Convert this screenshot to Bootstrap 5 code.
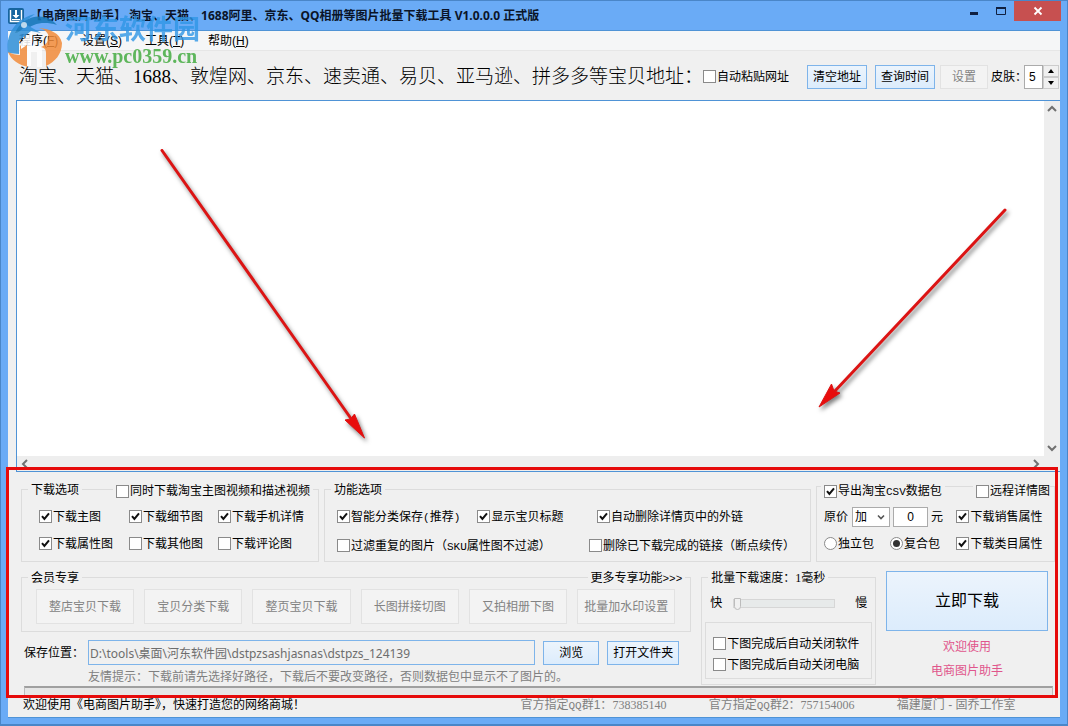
<!DOCTYPE html>
<html lang="zh-CN">
<head>
<meta charset="utf-8">
<meta name="viewport" content="width=device-width, initial-scale=1">
<title>电商图片助手</title>
<link href="https://cdn.jsdelivr.net/npm/bootstrap@5.3.0/dist/css/bootstrap.min.css" rel="stylesheet">
<style>
:root { --face: #f0f0f0; --line: #dcdcdc; --frame: #6aabf6; --edge: #4f93d6; }
body { background: var(--frame); color: #000; font: 12px/16px "Liberation Sans", "Noto Sans CJK SC", sans-serif; }
button, input, select { font: inherit; color: inherit; }
a { color: inherit; text-decoration: none; }
label { white-space: nowrap; }
.hw { font-family: "Liberation Mono", "Noto Sans CJK SC", monospace; font-size: 11px; line-height: 12px; }
.dg { font-family: "Liberation Serif", "Noto Sans CJK SC", serif; }

/* window frame */
.win { border: 1px solid #4a86c8; border-bottom-width: 2px; padding: 0 7px 6px; }
.titlebar { height: 29px; font-family: "Noto Sans", "Noto Sans CJK SC", sans-serif; }
.titlebar h1 { font-size: 12px; line-height: 16px; font-weight: 700; color: #0a1428; margin-left: 6px; }
.winbtns { height: 20px; }
.winbtns button { border: 0; background: none; padding: 0; width: 27px; display: grid; place-items: center; }
.winbtns .shut { background: #c75050; width: 47px; margin-right: -1px; }
.client { background: var(--face); border: solid var(--edge); border-width: 1px 0 1px 0; }
.menubar { background: #f5f6f7; border-bottom: 1px solid #e6e6e6; height: 20px; padding-left: 11px; }
.menubar a { width: 63px; }
.menubar .nav-item u { text-decoration-thickness: 1px; text-underline-offset: 1px; }

/* watermark */
.brand { left: 4px; top: 10px; pointer-events: none; z-index: 3; gap: 2px; }
.brand b { display: block; font-family: "Noto Sans CJK SC", sans-serif; font-size: 27px; line-height: 34px; color: #2f97e6; opacity: .8; }
.brand i { display: block; font: bold 20px/22px "Liberation Serif", serif; color: #4fb04c; opacity: .9; }

/* toolbar */
.tools { height: 49px; padding: 2px 1px 0 11px; }
.tools .lead-label { font-family: "Liberation Serif", "Noto Sans CJK SC", serif; font-size: 19px; line-height: 24px; font-weight: 300; }
.cmd { border: 1px solid #7eb4ea; border-radius: 0; background: linear-gradient(#ecf4fc, #dcecfc); padding: 0 4px; height: 24px; white-space: nowrap; color: #000; }
.cmd:disabled { border-color: #e2e2e2; background: #f3f3f3; color: #838383; }
.cmd.w-s { width: 48px; margin-left: 5px; margin-right: 3px; }
.cmd.w-m { width: 60px; }
.cmd.tall { height: 35px; }
.cmd.big { height: 60px; font-size: 16px; }
.field { border: 1px solid #ababab; border-radius: 0; background: #fff; padding: 0 4px; min-width: 0; }
.skin-label { margin-right: -3px; }
.num { width: 19px; height: 24px; }
.spin button { border: 1px solid #ccc; background: #f0f0f0; padding: 0; width: 16px; height: 12px; display: grid; place-items: center; }

/* address editor */
.editor { margin-left: 8px; border: solid var(--edge); border-width: 1px 0 1px 1px; display: grid; grid-template: minmax(200px, 1fr) 15px / 1fr 16px; }
.editor textarea { border: 0; resize: none; overflow: hidden; border-radius: 0; outline: 0; }
.bar { background: #eee; }
.marks { inset: 0; pointer-events: none; filter: drop-shadow(2px 3px 2px rgba(0, 0, 0, .5)); }

/* option panel */
.panel { padding: 17px 5px 0 13px; }
.outline { inset: -5px 2px -1px -2px; border: 3px solid #e60a0a; pointer-events: none; z-index: 2; }
.row-a { display: grid; grid-template-columns: 298fr 487fr 239fr; gap: 5px; }
.row-b { display: grid; grid-template-columns: 671fr 175fr 162fr; gap: 10px; padding-right: 7px; margin-top: 9px; }
.box { border: 1px solid var(--line); }
.cap { margin-top: -9px; height: 18px; padding: 0 5px 0 6px; }
.cap > * { background: var(--face); padding: 0 3px; }
.opts { display: grid; grid-auto-rows: 27px; align-items: center; }
.opts-1 { grid-template-columns: 90fr 89fr 100fr; padding: 4px 0 4px 17px; }
.opts-2 { grid-template-columns: 141fr 120fr 214fr; row-gap: 2px; padding: 4px 0 2px 12px; }
.opts-2 .wide { grid-column: 1 / 3; }
.opts-2 .pull { margin-left: -8px; }
.opts-3 { grid-template-columns: 133fr 98fr; padding: 7px 0 3px 7px; }
.lift { margin-top: -3px; }
.tick { display: inline-flex; align-items: center; gap: 1px; }
.tick .form-check-input { width: 13px; height: 13px; margin: 0; border: 1px solid #8a8a8a; border-radius: 0; background-color: #fff; background-size: 11px 11px; flex: none; }
.tick .form-check-input[type=radio] { border-radius: 50%; }
.tick .form-check-input:checked[type=checkbox] { background-image: url("data:image/svg+xml,%3Csvg xmlns='http://www.w3.org/2000/svg' viewBox='0 0 11 11'%3E%3Cpath d='M2 5.2 4.4 8 9 2.3' fill='none' stroke='%23111' stroke-width='2'/%3E%3C/svg%3E"); }
.tick .form-check-input:checked[type=radio] { background-image: url("data:image/svg+xml,%3Csvg xmlns='http://www.w3.org/2000/svg' viewBox='0 0 11 11'%3E%3Ccircle cx='5.5' cy='5.5' r='3.5' fill='%23333'/%3E%3C/svg%3E"); }
.pick { appearance: none; width: 38px; height: 20px; padding: 0 2px; background: #fff url("data:image/svg+xml,%3Csvg xmlns='http://www.w3.org/2000/svg' viewBox='0 0 8 8'%3E%3Cpath d='M1 2.5 4 5.5 7 2.5' fill='none' stroke='%23555' stroke-width='1.6'/%3E%3C/svg%3E") no-repeat right 4px center / 8px; }
.price { width: 35px; height: 20px; margin: 0 3px; }
.members { display: grid; grid-template-columns: repeat(6, 1fr); gap: 10px; padding: 2px 15px 7px 14px; }
.below { margin-top: 6px; }
.path { height: 25px; border-color: #7eb4ea; background: #f0f0f0; color: #6d6d6d; padding: 0 1px; font-family: "Noto Sans", "Noto Sans CJK SC", sans-serif; }
.save { margin: 8px 12px 0 3px; display: grid; grid-template-columns: 60px 1fr 56px 72px; column-gap: 8px; row-gap: 4px; align-items: center; }
.save label { margin-right: -4px; }
.save .path { margin-left: -4px; }
.save .tip { grid-column: 2 / 5; margin-left: -4px; color: #808080; white-space: nowrap; }
.speed input { appearance: none; background: none; flex: 0 1 102px; min-width: 0; height: 16px; margin-left: 11px; margin-right: auto; }
.speed input::-webkit-slider-runnable-track { height: 9px; background: #e7eaea; border: 1px solid #d6d6d6; }
.speed input::-webkit-slider-thumb { appearance: none; width: 7px; height: 12px; margin-top: -2px; background: #f0f0f0; border: 1px solid #bcbcbc; border-radius: 0 0 4px 4px; }
.after { margin: 11px 3px 3px; padding: 10px 7px 3px; display: grid; grid-auto-rows: 21px; align-items: center; }
.pink { color: #e0558c; line-height: 24px; }
.meter { height: 11px; margin: 1px 2px 0 3px; border: 1px solid #bcbcbc; border-top: 2px solid #a0a0a0; border-radius: 0; background: #e6e6e6; }
.foot { height: 20px; padding: 0 6px 4px 15px; display: grid; grid-template-columns: 497fr 188fr 188fr 157fr; align-items: center; color: #808080; white-space: nowrap; }
</style>
</head>
<body>
<div class="win d-flex flex-column min-vh-100 position-relative">

  <header class="titlebar d-flex align-items-center">
    <svg width="16" height="16" viewBox="0 0 16 16" aria-hidden="true"><rect width="16" height="16" rx="2" fill="#17659f"/><path d="M2.500 2v11.500h11V2" fill="none" stroke="#fff" stroke-width="1.400"/><path d="M7 2h2v5h2.500L8 10.500 4.500 7H7z" fill="#fff"/><path d="M4 11.500h8" stroke="#fff"/></svg>
    <h1 class="mb-0 text-nowrap">【电商图片助手】 淘宝、天猫、1688阿里、京东、QQ相册等图片批量下载工具 V1.0.0.0 正式版</h1>
    <div class="winbtns d-flex ms-auto align-self-start">
      <button type="button" aria-label="最小化"><svg width="10" height="10"><path d="M1 6h8v3H1z" fill="#102040"/></svg></button>
      <button type="button" aria-label="最大化"><svg width="12" height="10"><path d="M1.500 1.500h9v7h-9z" fill="none" stroke="#102040" stroke-width="1"/><path d="M1 1h10v2H1z" fill="#102040"/></svg></button>
      <button type="button" class="shut" aria-label="关闭"><svg width="10" height="10"><path d="M1.500 1.500l7 7m0-7l-7 7" stroke="#fff" stroke-width="1.800"/></svg></button>
    </div>
  </header>

  <div class="brand position-absolute d-flex" aria-hidden="true">
    <svg width="58" height="58" viewBox="0 0 58 58">
      <g opacity=".85">
      <path d="M3 42C0 22 12 7 30 3 16 12 11 24 12 34z" fill="#2f8fd8"/>
      <path d="M10 22C18 4 40 0 52 14 39 10 28 12 20 20z" fill="#1878b8"/>
      <path d="M4 29 22 14l14 8-10-2L14 30v13L3 42z" fill="#2f8fd8"/>
      <path d="M3 41c4 2 8 3 12 3v-9l8-7v28C14 54 6 49 3 41z" fill="#f28c3a"/>
      <path d="M16 31 27 21v14h5c4 0 5 2 5 5v16h-5V41h-6v14h-4V34l-6 4z" fill="#fff"/>
      <path d="M34 17c13 3 12 15 2 19 4 1 5 3 5 6v13c9-4 16-12 16-23-2-10-12-14-23-15z" fill="#f28c3a"/>
      </g>
      <circle cx="19" cy="14" r="3" fill="#fff" opacity=".7"/>
    </svg>
    <div><b>河东软件园</b><i>www.pc0359.cn</i></div>
  </div>

  <main class="client flex-grow-1 d-flex flex-column">
    <nav class="menubar d-flex align-items-center">
      <a class="nav-item" href="#">程序(<u>F</u>)</a><a class="nav-item" href="#">设置(<u>S</u>)</a><a class="nav-item" href="#">工具(<u>T</u>)</a><a class="nav-item" href="#">帮助(<u>H</u>)</a>
    </nav>

    <div class="tools d-flex align-items-center">
      <label class="lead-label" for="urls">淘宝、天猫、1688、敦煌网、京东、速卖通、易贝、亚马逊、拼多多等宝贝地址：</label>
      <label class="tick me-auto"><input class="form-check-input" type="checkbox">自动粘贴网址</label>
      <div class="d-flex gap-2">
        <button type="button" class="cmd w-m">清空地址</button>
        <button type="button" class="cmd w-m">查询时间</button>
      </div>
      <button type="button" class="cmd w-s" disabled>设置</button>
      <label class="skin-label" for="skin">皮肤：</label>
      <input id="skin" class="field num" value="5">
      <div class="spin d-flex flex-column">
        <button type="button" aria-label="增加"><svg width="6" height="4"><path d="M0 4h6L3 0z"/></svg></button>
        <button type="button" aria-label="减少"><svg width="6" height="4"><path d="M0 0h6L3 4z"/></svg></button>
      </div>
    </div>

    <div class="editor flex-grow-1 position-relative">
      <textarea id="urls"></textarea>
      <div class="bar d-flex flex-column justify-content-between align-items-center py-1">
        <svg width="10" height="8"><path d="M1 6l4-4 4 4" fill="none" stroke="#707070" stroke-width="2"/></svg>
        <svg width="10" height="8"><path d="M1 2l4 4 4-4" fill="none" stroke="#707070" stroke-width="2"/></svg>
      </div>
      <div class="bar d-flex justify-content-between align-items-center px-1">
        <svg width="8" height="10"><path d="M6 1L2 5l4 4" fill="none" stroke="#707070" stroke-width="2"/></svg>
        <svg width="8" height="10"><path d="M2 1l4 4-4 4" fill="none" stroke="#707070" stroke-width="2"/></svg>
      </div>
      <div class="bar"></div>
      <svg class="marks position-absolute w-100 h-100" viewBox="0 0 1043 370" preserveAspectRatio="none" aria-hidden="true">
        <g fill="#e80c0c" stroke="#dc1414">
          <path d="M145 49.500 335 319" stroke-width="3" stroke-linecap="round"/>
          <path d="M347.500 337 328 319l5.500-1 4-5z"/>
          <path d="M988 109 817 291" stroke-width="3" stroke-linecap="round"/>
          <path d="M802 306 814.500 283l2.500 7 6 2z"/>
        </g>
      </svg>
    </div>

    <section class="panel position-relative">
      <div class="outline position-absolute"></div>
      <div class="row-a">
        <div class="box" role="group" aria-labelledby="g1">
          <div class="cap d-flex align-items-center justify-content-between"><span id="g1">下载选项</span>
            <label class="tick align-self-end"><input class="form-check-input" type="checkbox">同时下载淘宝主图视频和描述视频</label></div>
          <div class="opts opts-1">
            <label class="tick"><input class="form-check-input" type="checkbox" checked>下载主图</label>
            <label class="tick"><input class="form-check-input" type="checkbox" checked>下载细节图</label>
            <label class="tick"><input class="form-check-input" type="checkbox" checked>下载手机详情</label>
            <label class="tick"><input class="form-check-input" type="checkbox" checked>下载属性图</label>
            <label class="tick"><input class="form-check-input" type="checkbox">下载其他图</label>
            <label class="tick"><input class="form-check-input" type="checkbox">下载评论图</label>
          </div>
        </div>
        <div class="box" role="group" aria-labelledby="g2">
          <div class="cap d-flex align-items-center"><span id="g2">功能选项</span></div>
          <div class="opts opts-2">
            <label class="tick"><input class="form-check-input" type="checkbox" checked><span>智能分类保存<span class="hw">(</span>推荐<span class="hw">)</span></span></label>
            <label class="tick"><input class="form-check-input" type="checkbox" checked>显示宝贝标题</label>
            <label class="tick"><input class="form-check-input" type="checkbox" checked>自动删除详情页中的外链</label>
            <label class="tick wide"><input class="form-check-input" type="checkbox"><span>过滤重复的图片（<span class="hw">SKU</span>属性图不过滤）</span></label>
            <label class="tick pull"><input class="form-check-input" type="checkbox">删除已下载完成的链接（断点续传）</label>
          </div>
        </div>
        <div class="box lift" role="group" aria-label="数据包">
          <div class="cap d-flex align-items-center justify-content-between px-1 pt-2">
            <label class="tick"><input class="form-check-input" type="checkbox" checked><span>导出淘宝<span class="hw">CSV</span>数据包</span></label>
            <label class="tick pe-0"><input class="form-check-input" type="checkbox">远程详情图</label></div>
          <div class="opts opts-3">
            <div class="d-flex align-items-center"><label class="me-1" for="mode">原价</label>
              <select id="mode" class="field pick"><option>加</option></select>
              <input class="field price text-center" value="0" aria-label="金额"><span>元</span></div>
            <label class="tick"><input class="form-check-input" type="checkbox" checked>下载销售属性</label>
            <div class="d-flex gap-3"><label class="tick"><input class="form-check-input" type="radio" name="pk">独立包</label>
              <label class="tick"><input class="form-check-input" type="radio" name="pk" checked>复合包</label></div>
            <label class="tick"><input class="form-check-input" type="checkbox" checked>下载类目属性</label>
          </div>
        </div>
      </div>

      <div class="row-b">
        <div>
          <div class="box below" role="group" aria-labelledby="g4">
            <div class="cap d-flex align-items-center justify-content-between"><span id="g4">会员专享</span><a href="#">更多专享功能<span class="hw">&gt;&gt;&gt;</span></a></div>
            <div class="members">
              <button type="button" class="cmd tall" disabled>整店宝贝下载</button>
              <button type="button" class="cmd tall" disabled>宝贝分类下载</button>
              <button type="button" class="cmd tall" disabled>整页宝贝下载</button>
              <button type="button" class="cmd tall" disabled>长图拼接切图</button>
              <button type="button" class="cmd tall" disabled>又拍相册下图</button>
              <button type="button" class="cmd tall" disabled>批量加水印设置</button>
            </div>
          </div>
          <div class="save">
            <label for="dir">保存位置：</label>
            <input id="dir" class="field path" readonly value="D:\tools\桌面\河东软件园\dstpzsashjasnas\dstpzs_124139">
            <button type="button" class="cmd">浏览</button>
            <button type="button" class="cmd">打开文件夹</button>
            <div class="tip">友情提示：下载前请先选择好路径，下载后不要改变路径，否则数据包中显示不了图片的。</div>
          </div>
        </div>
        <div class="box below" role="group" aria-labelledby="g5">
          <div class="cap d-flex align-items-center"><span id="g5">批量下载速度：<span class="dg">1</span>毫秒</span></div>
          <div class="speed d-flex align-items-center px-2 pt-2"><span>快</span><input type="range" value="0" aria-label="速度"><span>慢</span></div>
          <div class="box after">
            <label class="tick"><input class="form-check-input" type="checkbox">下图完成后自动关闭软件</label>
            <label class="tick"><input class="form-check-input" type="checkbox">下图完成后自动关闭电脑</label>
          </div>
        </div>
        <div class="d-flex flex-column text-center">
          <button type="button" class="cmd big mb-1">立即下载</button>
          <span class="pink">欢迎使用</span><span class="pink">电商图片助手</span>
        </div>
      </div>
      <div class="meter" role="progressbar" aria-label="下载进度" aria-valuenow="0" aria-valuemin="0" aria-valuemax="100"></div>
    </section>

    <footer class="foot">
      <span class="text-black">欢迎使用《电商图片助手》，快速打造您的网络商城！</span>
      <span>官方指定<span class="hw">QQ</span>群1：<span class="dg">738385140</span></span>
      <span>官方指定<span class="hw">QQ</span>群2：<span class="dg">757154006</span></span>
      <span>福建厦门 - 固乔工作室</span>
    </footer>
  </main>
</div>
<script src="https://cdn.jsdelivr.net/npm/bootstrap@5.3.0/dist/js/bootstrap.bundle.min.js"></script>
</body>
</html>
